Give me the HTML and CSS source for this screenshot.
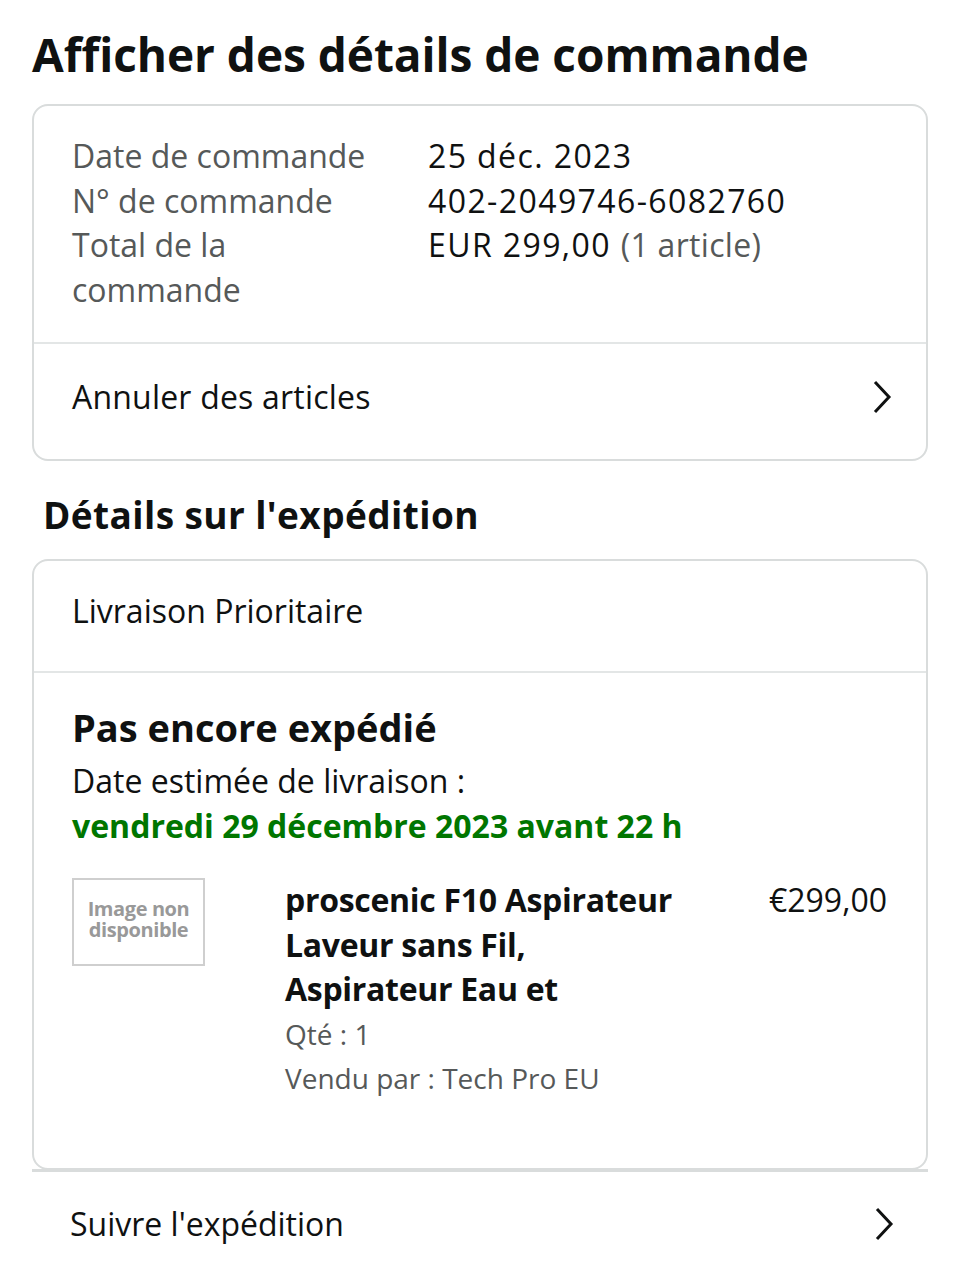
FILE: index.html
```html
<!DOCTYPE html>
<html lang="fr">
<head>
<meta charset="utf-8">
<title>Détails de commande</title>
<link rel="stylesheet" href="styles.css">
</head>
<body>
<main class="page">
  <h1 class="title">Afficher des détails de commande</h1>

  <section class="card">
    <div class="info">
      <div class="label">Date de commande</div>
      <div class="value">25 déc. 2023</div>
      <div class="label">N° de commande</div>
      <div class="value">402-2049746-6082760</div>
      <div class="label">Total de la commande</div>
      <div class="value">EUR 299,00 <span class="muted">(1 article)</span></div>
    </div>
    <div class="link-row">
      <span>Annuler des articles</span>
      <svg class="chev" width="20" height="34" viewBox="0 0 20 34"><path d="M3 2 L17 17 L3 32" fill="none" stroke="#0f1111" stroke-width="3"/></svg>
    </div>
  </section>

  <h2 class="subtitle">Détails sur l'expédition</h2>

  <section class="card card-ship">
    <div class="ship-method">Livraison Prioritaire</div>
    <div class="ship-body">
      <h3 class="status">Pas encore expédié</h3>
      <div class="est">Date estimée de livraison :</div>
      <div class="est-date">vendredi 29 décembre 2023 avant 22 h</div>
      <div class="product">
        <div class="thumb"><span>Image non disponible</span></div>
        <div class="pinfo">
          <div class="pname">proscenic F10 Aspirateur Laveur sans Fil, Aspirateur Eau et</div>
          <div class="meta">Qté : 1</div>
          <div class="meta">Vendu par : Tech Pro EU</div>
        </div>
        <div class="price">€299,00</div>
      </div>
    </div>
  </section>
  <div class="rule"></div>

  <div class="track-row">
    <span>Suivre l'expédition</span>
    <svg class="chev" width="20" height="34" viewBox="0 0 20 34"><path d="M3 2 L17 17 L3 32" fill="none" stroke="#0f1111" stroke-width="3"/></svg>
  </div>
</main>
</body>
</html>
```

FILE: styles.css
```css
* { box-sizing: border-box; }
html, body { margin: 0; padding: 0; background: #fff; }
body {
  font-family: "Open Sans", "Noto Sans", "DejaVu Sans", sans-serif;
  color: #0f1111;
  font-size: 32px;
}
.page { padding: 0 32px; }

.title {
  margin: 0;
  padding-top: 24px;
  font-size: 46px;
  line-height: 60px;
  font-weight: 700;
  letter-spacing: -0.05px;
}

.card {
  margin-top: 20px;
  border: 2px solid #d9dcdc;
  border-radius: 16px;
}

.info {
  display: grid;
  grid-template-columns: 310px 1fr;
  column-gap: 46px;
  padding: 28px 38px 30px;
  line-height: 44.5px;
}
.label { color: #565959; }
.value { color: #0f1111; letter-spacing: 1.4px; }
.muted { color: #565959; letter-spacing: 0.3px; }

.link-row {
  display: flex;
  align-items: center;
  justify-content: space-between;
  border-top: 2px solid #e3e6e6;
  padding: 0 34px 10px 38px;
  height: 117px;
}
.link-row span { letter-spacing: 0.2px; }

.subtitle {
  margin: 0;
  padding: 28px 0 0 11px;
  font-size: 37px;
  line-height: 52px;
  font-weight: 700;
  letter-spacing: 0.4px;
}

.card-ship { margin-top: 18px; }

.ship-method {
  height: 112px;
  display: flex;
  align-items: center;
  padding: 0 0 12px 38px;
  border-bottom: 2px solid #e3e6e6;
}

.ship-body {
  padding: 28px 39px 67px 38px;
}
.status {
  margin: 0;
  font-size: 38px;
  line-height: 52px;
  font-weight: 700;
  letter-spacing: 0;
}
.est {
  line-height: 44.5px;
  margin-top: 6px;
}
.est-date {
  color: #007600;
  font-weight: 700;
  line-height: 44.5px;
}

.product {
  display: flex;
  align-items: flex-start;
  margin-top: 30px;
}
.thumb {
  flex: none;
  width: 133px;
  height: 88px;
  border: 2px solid #cfcfcf;
  display: flex;
  align-items: center;
  justify-content: center;
}
.thumb span {
  font-size: 20px;
  line-height: 21px;
  font-weight: 700;
  color: #999;
  text-align: center;
  width: 124px;
  letter-spacing: -0.4px;
  margin-top: -6px;
}
.pinfo {
  flex: 1;
  padding-left: 80px;
  line-height: 44.5px;
}
.pname {
  font-weight: 700;
  width: 400px;
  letter-spacing: -0.3px;
}
.meta { color: #565959; font-size: 28px; }
.price {
  flex: none;
  line-height: 44.5px;
  text-align: right;
}

.rule {
  height: 3px;
  background: #d9dcdc;
  margin-top: -1px;
}

.track-row {
  display: flex;
  align-items: center;
  justify-content: space-between;
  height: 104px;
  padding: 0 34px 0 38px;
}
.chev { display: block; }
```
